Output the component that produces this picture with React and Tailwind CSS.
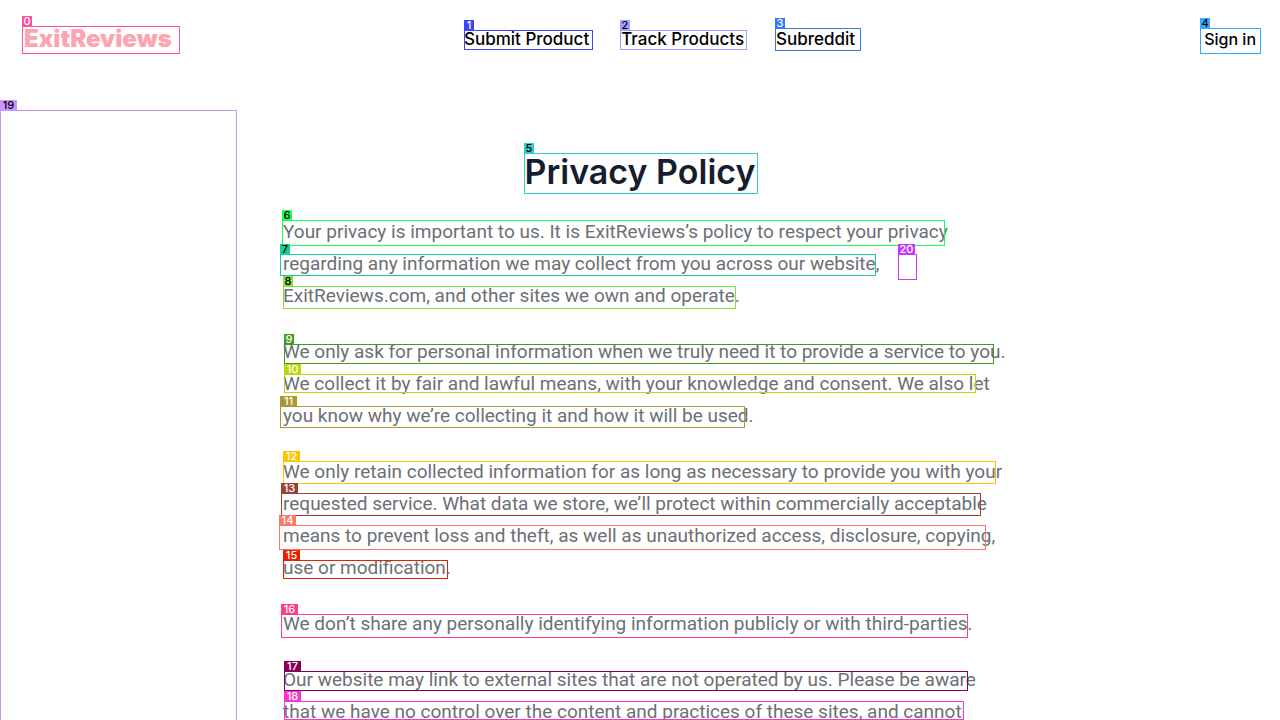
const paragraphs = [
  [
    'Your privacy is important to us. It is ExitReviews’s policy to respect your privacy',
    'regarding any information we may collect from you across our website,',
    'ExitReviews.com, and other sites we own and operate.',
  ],
  [
    'We only ask for personal information when we truly need it to provide a service to you.',
    'We collect it by fair and lawful means, with your knowledge and consent. We also let',
    'you know why we’re collecting it and how it will be used.',
  ],
  [
    'We only retain collected information for as long as necessary to provide you with your',
    'requested service. What data we store, we’ll protect within commercially acceptable',
    'means to prevent loss and theft, as well as unauthorized access, disclosure, copying,',
    'use or modification.',
  ],
  ['We don’t share any personally identifying information publicly or with third-parties.'],
  [
    'Our website may link to external sites that are not operated by us. Please be aware',
    'that we have no control over the content and practices of these sites, and cannot',
  ],
];

const marks = [
  { box: 'left-[22px] top-[16px] w-[158px]', frame: 'h-[28px] border-[#ff4fa0]', tag: 'w-[10px] bg-[#ff4fa0] text-white' },
  { box: 'left-[464px] top-[20px] w-[129px]', frame: 'h-[20px] border-[#4040ff]', tag: 'w-[10px] bg-[#4040ff] text-white' },
  { box: 'left-[620px] top-[20px] w-[127px]', frame: 'h-[20px] border-[#9f9fff]', tag: 'w-[10px] bg-[#9f9fff] text-black' },
  { box: 'left-[775px] top-[18px] w-[86px]', frame: 'h-[23px] border-[#3377ff]', tag: 'w-[10px] bg-[#3377ff] text-white' },
  { box: 'left-[1200px] top-[18px] w-[61px]', frame: 'h-[26px] border-[#33aaff]', tag: 'w-[10px] bg-[#33aaff] text-black' },
  { box: 'left-[524px] top-[143px] w-[234px]', frame: 'h-[41px] border-[#33cccc]', tag: 'w-[10px] bg-[#33cccc] text-black' },
  { box: 'left-[282px] top-[210px] w-[663px]', frame: 'h-[26px] border-[#1aff53]', tag: 'w-[10px] bg-[#1aff53] text-black' },
  { box: 'left-[280px] top-[244px] w-[596px]', frame: 'h-[22px] border-[#1acc99]', tag: 'w-[10px] bg-[#1acc99] text-black' },
  { box: 'left-[283px] top-[276px] w-[453px]', frame: 'h-[23px] border-[#88dd44]', tag: 'w-[10px] bg-[#88dd44] text-black' },
  { box: 'left-[284px] top-[334px] w-[710px]', frame: 'h-[20px] border-[#449922]', tag: 'w-[10px] bg-[#449922] text-white' },
  { box: 'left-[284px] top-[364px] w-[692px]', frame: 'h-[19px] border-[#bfd60d]', tag: 'w-[17px] bg-[#bfd60d] text-white' },
  { box: 'left-[280px] top-[396px] w-[465px]', frame: 'h-[22px] border-[#aa9933]', tag: 'w-[17px] bg-[#aa9933] text-white' },
  { box: 'left-[283px] top-[451px] w-[713px]', frame: 'h-[23px] border-[#ffc400]', tag: 'w-[17px] bg-[#ffc400] text-white' },
  { box: 'left-[281px] top-[483px] w-[700px]', frame: 'h-[23px] border-[#994433]', tag: 'w-[17px] bg-[#994433] text-white' },
  { box: 'left-[279px] top-[515px] w-[707px]', frame: 'h-[25px] border-[#ff7766]', tag: 'w-[17px] bg-[#ff7766] text-white' },
  { box: 'left-[283px] top-[550px] w-[165px]', frame: 'h-[19px] border-[#ee1c00]', tag: 'w-[17px] bg-[#ee1c00] text-white' },
  { box: 'left-[281px] top-[604px] w-[687px]', frame: 'h-[24px] border-[#ff3c88]', tag: 'w-[17px] bg-[#ff3c88] text-white' },
  { box: 'left-[284px] top-[661px] w-[684px]', frame: 'h-[20px] border-[#880055]', tag: 'w-[17px] bg-[#880055] text-white' },
  { box: 'left-[284px] top-[691px] w-[680px]', frame: 'h-[19px] border-[#ff33cc]', tag: 'w-[17px] bg-[#ff33cc] text-white' },
  { box: 'left-0 top-[100px] w-[237px]', frame: 'h-[640px] border-[#c896ff]', tag: 'w-[17px] bg-[#c896ff] text-black' },
  { box: 'left-[898px] top-[244px] w-[19px]', frame: 'h-[26px] border-[#c837ff]', tag: 'w-[17px] bg-[#c837ff] text-white' },
];

function Mark({ mark, label }) {
  return (
    <div className={`absolute ${mark.box}`}>
      <div className={`flex h-[10px] items-center justify-center text-[11px] leading-[10px] font-medium ${mark.tag}`}>
        {label}
      </div>
      <div className={`border ${mark.frame}`} />
    </div>
  );
}

export default function App() {
  return (
    <div className="relative h-screen overflow-hidden bg-white font-[Inter,sans-serif]">
      <header className="flex h-[78px] items-center px-6">
        <a href="#home" className="w-[440px] text-2xl leading-8 font-black text-[#fda4af]">
          ExitReviews
        </a>
        <nav className="flex flex-1 gap-8 text-[17px] leading-6 font-medium text-black">
          <a href="#submit">Submit Product</a>
          <a href="#track">Track Products</a>
          <a href="#subreddit">Subreddit</a>
        </nav>
        <a href="#signin" className="text-base leading-6 font-medium text-black">
          Sign in
        </a>
      </header>
      <main className="mx-auto max-w-[714px] pt-[74px]">
        <h1 className="text-center text-[34px] leading-10 font-semibold text-[#161e2e]">Privacy Policy</h1>
        {paragraphs.map((lines) => (
          <p
            key={lines[0]}
            className="mt-6 font-[Roboto,sans-serif] text-[19px] leading-8 whitespace-nowrap text-[#6b7075]"
          >
            {lines.map((line) => (
              <span key={line} className="block">
                {line}
              </span>
            ))}
          </p>
        ))}
      </main>
      <div className="pointer-events-none absolute inset-0">
        {marks.map((mark, i) => (
          <Mark key={i} mark={mark} label={i} />
        ))}
      </div>
    </div>
  );
}
